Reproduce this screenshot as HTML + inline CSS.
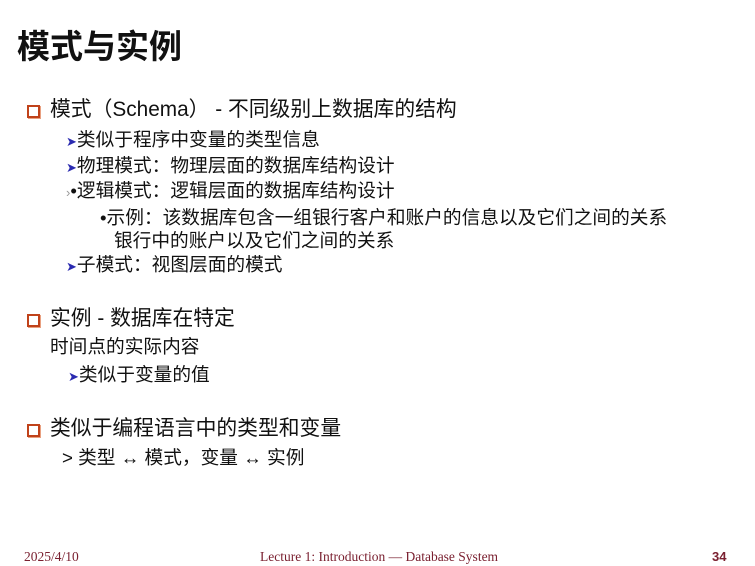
<!DOCTYPE html><html><head><meta charset="utf-8"><style>
body{margin:0;width:755px;height:566px;background:#fff;position:relative;overflow:hidden;font-family:"Liberation Sans","Noto Sans CJK SC",sans-serif;color:#111}
.t{position:absolute;white-space:nowrap;line-height:1}
.h{font-size:33px;font-weight:bold;left:17px;top:30px}
.m{font-size:20.8px;left:50px}
.s{font-size:18.7px}
.box{position:absolute;left:27px;width:9px;height:9px;border:2px solid #c0421a;background:#fff;box-shadow:1px 1px 0 #e9a080}
.a{color:#2a2ab0;font-size:13px}
.f{font-family:"Liberation Serif",serif;font-size:13.5px;color:#7a2030;top:550px}
</style></head><body>
<div class="t h">模式与实例</div>
<div class="box" style="top:105px"></div>
<div class="t m" style="top:100px">模式（Schema） - 不同级别上数据库的结构</div>
<div class="t s" style="left:66px;top:131px"><span class="a">➤</span>类似于程序中变量的类型信息</div>
<div class="t s" style="left:66px;top:157px"><span class="a">➤</span>物理模式：物理层面的数据库结构设计</div>
<div class="t s" style="left:66px;top:182px"><span class="a" style="color:#999">›</span>•逻辑模式：逻辑层面的数据库结构设计</div>
<div class="t s" style="left:100px;top:209px">•示例：该数据库包含一组银行客户和账户的信息以及它们之间的关系</div>
<div class="t s" style="left:114px;top:232px">银行中的账户以及它们之间的关系</div>
<div class="t s" style="left:66px;top:256px"><span class="a">➤</span>子模式：视图层面的模式</div>
<div class="box" style="top:314px"></div>
<div class="t m" style="top:309px">实例 - 数据库在特定</div>
<div class="t s" style="left:50px;top:338px">时间点的实际内容</div>
<div class="t s" style="left:68px;top:366px"><span class="a">➤</span>类似于变量的值</div>
<div class="box" style="top:424px"></div>
<div class="t m" style="top:419px">类似于编程语言中的类型和变量</div>
<div class="t s" style="left:62px;top:449px">&gt; 类型 ↔ 模式，变量 ↔ 实例</div>
<div class="t f" style="left:24px">2025/4/10</div>
<div class="t f" style="left:260px">Lecture 1: Introduction — Database System</div>
<div class="t f" style="left:712px;font-family:'Liberation Sans',sans-serif;font-weight:bold;font-size:13px">34</div>
</body></html>
